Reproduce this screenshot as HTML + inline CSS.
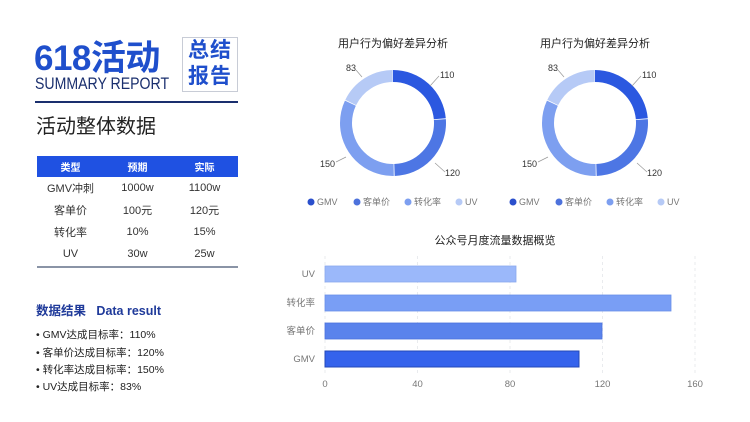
<!DOCTYPE html>
<html><head><meta charset="utf-8"><style>
*{margin:0;padding:0;box-sizing:border-box}
body{width:750px;height:422px;background:#fff;position:relative;overflow:hidden;font-family:"Liberation Sans","Noto Sans CJK SC",sans-serif;color:#333}
.a{position:absolute;white-space:nowrap}
table{border-collapse:collapse}
.t td{height:22px;text-align:center;font-size:11px;color:#333;width:67px}
.t tr.h td{background:#1f51e2;color:#fff;font-weight:bold;height:21px;font-size:10px}
.li{font-size:10.5px;color:#222}
</style></head><body>
<div class="a" style="left:34px;top:30px;font-size:35px;font-weight:bold;color:#1f4fcc;letter-spacing:-0.5px">618活动</div>
<div class="a" style="left:35px;top:74px;font-size:17px;color:#1a2f6e;transform:scaleX(0.83);transform-origin:0 0">SUMMARY REPORT</div>
<div class="a" style="left:182px;top:37px;width:56px;height:55px;border:1px solid #c8ccd6"></div>
<div class="a" style="left:188px;top:38px;font-size:21px;font-weight:bold;color:#1f4fcc;line-height:26px;letter-spacing:1px">总结<br>报告</div>
<div class="a" style="left:35px;top:101px;width:203px;height:2px;background:#1a2f6e"></div>
<div class="a" style="left:36px;top:110px;font-size:20px;color:#222">活动整体数据</div>
<table class="t a" style="left:37px;top:156px;width:201px">
<tr class="h"><td>类型</td><td>预期</td><td>实际</td></tr>
<tr><td>GMV冲刺</td><td>1000w</td><td>1100w</td></tr>
<tr><td>客单价</td><td>100元</td><td>120元</td></tr>
<tr><td>转化率</td><td>10%</td><td>15%</td></tr>
<tr><td>UV</td><td>30w</td><td>25w</td></tr>
</table>
<div class="a" style="left:37px;top:266px;width:201px;height:2px;background:#8a94a6"></div>
<div class="a" style="left:36px;top:300px;font-size:12.5px;font-weight:bold;color:#1f3a9a">数据结果&nbsp;&nbsp;&nbsp;Data result</div>
<div class="a li" style="left:36px;top:327px">• GMV达成目标率：110%</div>
<div class="a li" style="left:36px;top:345px">• 客单价达成目标率：120%</div>
<div class="a li" style="left:36px;top:362px">• 转化率达成目标率：150%</div>
<div class="a li" style="left:36px;top:379px">• UV达成目标率：83%</div>

<svg class="a" style="left:0;top:0" width="750" height="422">
<g font-family="Liberation Sans, Noto Sans CJK SC, sans-serif">
<g id="d1">
<text x="393" y="47" font-size="11" text-anchor="middle" fill="#222">用户行为偏好差异分析</text>
<g transform="translate(393,123) rotate(-90)" fill="none" stroke-width="12">
<circle r="47" stroke="#2b58e0" stroke-dasharray="69.4 300" stroke-dashoffset="0"/>
<circle r="47" stroke="#4d76e4" stroke-dasharray="75.7 300" stroke-dashoffset="-70.2"/>
<circle r="47" stroke="#7d9ff0" stroke-dasharray="94.9 300" stroke-dashoffset="-146.7"/>
<circle r="47" stroke="#b6caf6" stroke-dasharray="52.1 300" stroke-dashoffset="-242.4"/>
</g>
<g stroke="#999" stroke-width="0.7" fill="none">
<path d="M430 86 L439 76"/><path d="M435 163 L445 172"/><path d="M346 157 L336 162"/><path d="M362 77 L356 70"/>
</g>
<g font-size="9" fill="#333">
<text x="440" y="78">110</text><text x="445" y="176">120</text><text x="320" y="167">150</text><text x="346" y="71">83</text>
</g>
<g font-size="9" fill="#777">
<circle cx="311" cy="202" r="3.5" fill="#2a4fcc"/><text x="317" y="205">GMV</text>
<circle cx="357" cy="202" r="3.5" fill="#4d72dc"/><text x="363" y="205">客单价</text>
<circle cx="408" cy="202" r="3.5" fill="#7d9ff0"/><text x="414" y="205">转化率</text>
<circle cx="459" cy="202" r="3.5" fill="#b6caf6"/><text x="465" y="205">UV</text>
</g>
</g>
<use href="#d1" transform="translate(202,0)"/>

<text x="495" y="244" font-size="11" text-anchor="middle" fill="#222">公众号月度流量数据概览</text>
<g stroke="#e4e6ea" stroke-width="0.8" stroke-dasharray="3 3">
<line x1="325" y1="256" x2="325" y2="373"/><line x1="417.5" y1="256" x2="417.5" y2="373"/><line x1="510" y1="256" x2="510" y2="373"/><line x1="602.5" y1="256" x2="602.5" y2="373"/><line x1="695" y1="256" x2="695" y2="373"/>
</g>
<rect x="325" y="266" width="191" height="16" fill="#9bb8fa" stroke="#8aa8ee" stroke-width="0.8"/>
<rect x="325" y="295" width="346" height="16" fill="#799ef5" stroke="#6a8fe8" stroke-width="0.8"/>
<rect x="325" y="323" width="277" height="16" fill="#5a83ec" stroke="#4a72dc" stroke-width="0.8"/>
<rect x="325" y="351" width="254" height="16" fill="#3563ec" stroke="#2448b8" stroke-width="1"/>
<g font-size="9.5" fill="#777" text-anchor="end">
<text x="315" y="277">UV</text><text x="315" y="306">转化率</text><text x="315" y="334">客单价</text><text x="315" y="362">GMV</text>
</g>
<g font-size="9.5" fill="#777" text-anchor="middle">
<text x="325" y="387">0</text><text x="417.5" y="387">40</text><text x="510" y="387">80</text><text x="602.5" y="387">120</text><text x="695" y="387">160</text>
</g>
</g>
</svg>
</body></html>
